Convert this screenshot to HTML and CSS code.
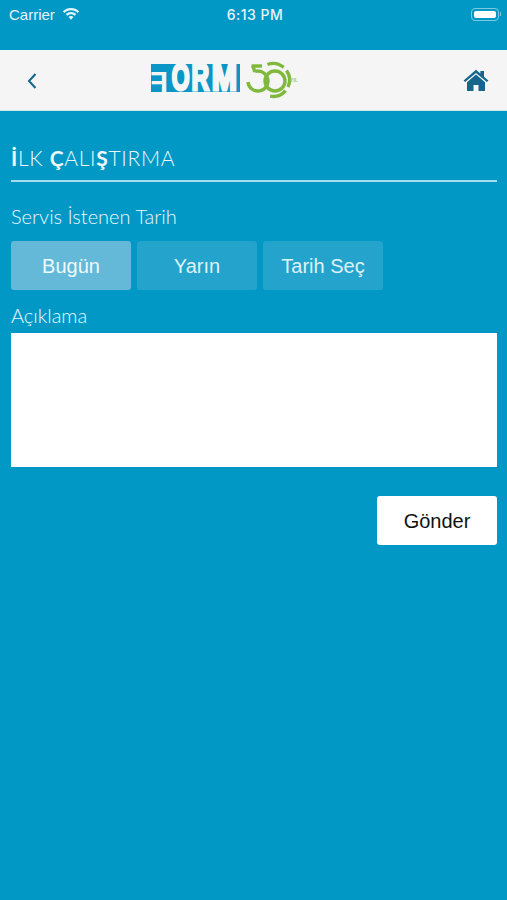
FILE: index.html
```html
<!DOCTYPE html>
<html lang="tr">
<head>
<meta charset="utf-8">
<title>İlk Çalıştırma</title>
<link rel="stylesheet" href="styles.css">
</head>
<body>
<div class="status">
  <div class="status-left">
    <span>Carrier</span>
    <svg class="wifi" viewBox="0 0 18 13" width="18" height="13"><path d="M9 1C5.800 1 3 2.200.8 4.300l1.500 1.600C4.100 4.200 6.400 3.200 9 3.200s4.900 1 6.700 2.700l1.500-1.600C15 2.200 12.200 1 9 1z" fill="#e6f5fa"/><path d="M9 5C7 5 5.200 5.800 3.800 7.100l1.500 1.600C6.300 7.800 7.600 7.200 9 7.200s2.700.6 3.700 1.500l1.500-1.600C12.800 5.800 11 5 9 5z" fill="#e6f5fa"/><path d="M9 9c-1 0-1.900.4-2.500 1L9 12.700l2.500-2.700C10.900 9.400 10 9 9 9z" fill="#e6f5fa"/></svg>
  </div>
  <div class="status-time">6:13 PM</div>
  <div class="status-right">
    <span class="battery"><span class="battery-fill"></span></span><span class="battery-cap"></span>
  </div>
</div>
<header class="nav">
  <svg class="back" viewBox="0 0 12 18" width="12" height="18"><path d="M9.500 2L3 9l6.500 7" fill="none" stroke="#14668c" stroke-width="2"/></svg>
  <div class="logo">
    <div class="logo-strip">
      <span class="logo-letter logo-f">F</span>
      <span class="logo-letter logo-o">O</span>
      <span class="logo-letter logo-r">R</span>
      <span class="logo-letter logo-m">M</span>
    </div>
    <svg class="logo-50" viewBox="0 0 55 42" width="55" height="42">
      <g fill="none" stroke="#7fb83d" stroke-width="3.400">
        <path d="M6.500 6H17"/>
        <path d="M8 6l1.800 6"/>
        <path d="M10 11.500A10 10 0 1 1 3 22"/>
        <circle cx="30" cy="21" r="10"/>
        <path d="M22.400 4.500A16.500 16.500 0 0 1 38.600 7.400"/>
        <path d="M41.500 10.500A16.500 16.500 0 0 1 43 27"/>
        <path d="M40.600 30.600A16.500 16.500 0 0 1 25.100 36.200"/>
      </g>
      <text x="45" y="22" class="logo-yil">YIL</text>
    </svg>
  </div>
  <svg class="home" viewBox="0 0 26 22" width="26" height="22"><path d="M13 .8L.6 11.400l1.500 1.700L13 3.900l10.900 9.200 1.500-1.700-4.400-3.700V2h-3.600v2.600z" fill="#14668c"/><path d="M13 5.600L4 13.200V22h6.500v-6h5v6H22v-8.800z" fill="#14668c"/></svg>
</header>
<main class="content">
  <h1 class="title"><span class="heavy">İ</span>LK <span class="heavy">Ç</span>ALI<span class="heavy">Ş</span>TIRMA</h1>
  <div class="label label-date">Servis İstenen Tarih</div>
  <div class="choices">
    <button class="choice active">Bugün</button>
    <button class="choice">Yarın</button>
    <button class="choice">Tarih Seç</button>
  </div>
  <div class="label label-note">Açıklama</div>
  <div class="note"></div>
  <div class="actions"><button class="send">Gönder</button></div>
</main>
</body>
</html>
```
FILE: styles.css
```css
* { box-sizing: border-box; }
html, body { margin: 0; padding: 0; }
body {
  width: 507px;
  height: 900px;
  overflow: hidden;
  background: #0198c6;
  color: #e6f5fa;
  font-family: "Liberation Sans", Arial, sans-serif;
}
.status {
  height: 50px;
  padding: 0 6px 22px 9px;
  display: grid;
  grid-template-columns: 1fr auto 1fr;
  align-items: center;
  font-size: 15px;
}
.status-left { display: flex; align-items: center; gap: 7px; }
.wifi { margin-top: -2px; }
.status-time { font-weight: 500; letter-spacing: .5px; font-family: "Inter", "Liberation Sans", sans-serif; font-size: 14px; }
.status-right { display: flex; justify-content: flex-end; align-items: center; }
.battery {
  width: 28px;
  height: 13px;
  padding: 2px;
  border: 1px solid #7cc8e0;
  border-radius: 4px;
  display: block;
}
.battery-fill { display: block; height: 100%; background: #fff; border-radius: 2px; }
.battery-cap { width: 1px; height: 4px; margin-left: 1px; background: #7cc8e0; display: block; }
.nav {
  height: 61px;
  background: #f5f5f5;
  border-bottom: 1px solid #cfe6ee;
  display: flex;
  align-items: center;
  padding: 0 18px 0 26px;
}
.back { margin-top: 1px; }
.logo {
  margin-left: 113px;
  display: flex;
  align-items: center;
  height: 42px;
  margin-top: 2px;
}
.logo-strip {
  width: 89px;
  height: 28px;
  margin-top: -7px;
  background: #0a96c6;
  display: flex;
}
.logo-letter {
  display: block;
  height: 28px;
  color: #f5f5f5;
  font: 700 37px/28px "Liberation Sans", Arial, sans-serif;
  text-align: center;
  transform-origin: center;
  -webkit-text-stroke: 3px #f5f5f5;
}
.logo-f {
  width: 17px;
  font-size: 29px;
  line-height: 36px;
  transform: scaleX(-1);
  -webkit-text-stroke: 0;
}
.logo-o {
  width: 20px;
  transform: scaleX(.62);
}
.logo-r {
  width: 21px;
  transform: scaleX(.66);
}
.logo-m {
  width: 31px;
  transform: scaleX(.82);
}
.logo-50 { margin-left: 5px; }
.logo-yil { font: 700 5px "Liberation Sans", Arial, sans-serif; fill: #9cc96a; }
.home { margin-left: auto; }
.content { padding: 0 10px 0 11px; }
.title {
  margin: 0;
  padding-top: 34px;
  height: 71px;
  border-bottom: 2px solid #a5dcec;
  font-family: "Lato", sans-serif;
  font-weight: 300;
  font-size: 21px;
  line-height: 26px;
  letter-spacing: .7px;
  color: #eef9fc;
}
.heavy { font-weight: 700; }
.label {
  font-family: "Lato", sans-serif;
  font-size: 20px;
  font-weight: 300;
  line-height: 24px;
  color: #eef9fc;
}
.label-date { margin-top: 22px; }
.choices { display: flex; gap: 6px; margin-top: 13px; }
.choice {
  width: 120px;
  height: 49px;
  border: 0;
  border-radius: 3px;
  background: #24a4cd;
  color: #dff2f8;
  font: 20px "Liberation Sans", Arial, sans-serif;
  padding: 2px 0 0;
}
.choice.active { background: #64b9d8; color: #eef9fc; }
.label-note { margin-top: 13px; height: 30px; }
.note { height: 134px; background: #fff; }
.actions { display: flex; justify-content: flex-end; margin-top: 29px; }
.send {
  width: 120px;
  height: 49px;
  border: 0;
  border-radius: 3px;
  background: #fff;
  color: #111;
  font: 20px "Liberation Sans", Arial, sans-serif;
  padding: 2px 0 0;
}
```
